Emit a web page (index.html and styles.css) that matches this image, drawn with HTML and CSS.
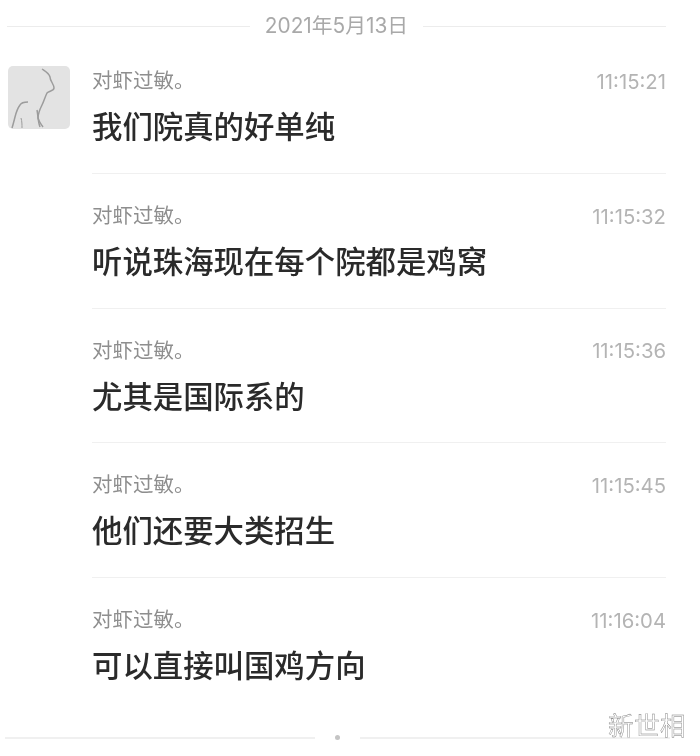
FILE: index.html
```html
<!DOCTYPE html>
<html lang="zh-CN">
<head>
    <meta charset="UTF-8">
    <title>聊天记录</title>
    <link rel="stylesheet" href="styles.css">
</head>
<body>
    <div class="page">
        <div class="day">
            <span class="day-line"></span>
            <span class="day-text">2021年5月13日</span>
            <span class="day-line"></span>
        </div>

        <div class="msg msg-first">
            <div class="avatar">
                <svg width="62" height="63" viewBox="0 0 62 63">
                    <path class="sketch" d="M34 3 C37 5 41 7 42 11 C42 15 46 18 46 22 C46 25 41 25 39 27 C37 31 36 35 34 39 C32 43 30 47 30 52 C31 56 33 58 35 61"/>
                    <path class="sketch" d="M29 44 C30 49 30 56 32 61"/>
                    <path class="sketch" d="M20 36 C16 36 13 37 12 39 C9 43 8 47 7 51 C6 55 5 59 4 62"/>
                    <path class="sketch thin" d="M13 52 C14 55 14 59 14 62"/>
                </svg>
            </div>
            <div class="msg-body">
                <div class="msg-head"><span class="name">对虾过敏。</span><span class="time">11:15:21</span></div>
                <div class="text">我们院真的好单纯</div>
            </div>
        </div>

        <div class="msg">
            <div class="msg-body">
                <div class="msg-head"><span class="name">对虾过敏。</span><span class="time">11:15:32</span></div>
                <div class="text">听说珠海现在每个院都是鸡窝</div>
            </div>
        </div>

        <div class="msg">
            <div class="msg-body">
                <div class="msg-head"><span class="name">对虾过敏。</span><span class="time">11:15:36</span></div>
                <div class="text">尤其是国际系的</div>
            </div>
        </div>

        <div class="msg">
            <div class="msg-body">
                <div class="msg-head"><span class="name">对虾过敏。</span><span class="time">11:15:45</span></div>
                <div class="text">他们还要大类招生</div>
            </div>
        </div>

        <div class="msg msg-last">
            <div class="msg-body">
                <div class="msg-head"><span class="name">对虾过敏。</span><span class="time">11:16:04</span></div>
                <div class="text">可以直接叫国鸡方向</div>
            </div>
        </div>

        <div class="foot">
            <span class="foot-line"></span>
            <span class="foot-dot"></span>
            <span class="foot-line"></span>
        </div>
    </div>
    <div class="mark">新世相</div>
</body>
</html>
```

FILE: styles.css
```css
* {
    box-sizing: border-box;
}

html, body {
    margin: 0;
    background: #fff;
}

body {
    font-family: "Inter", "Noto Sans CJK SC", sans-serif;
    width: 700px;
    height: 756px;
    overflow: hidden;
    position: relative;
}

.page {
    filter: blur(0.5px);
    height: 756px;
    padding: 13px 34px 0 0;
}

.day {
    display: flex;
    align-items: center;
    height: 26px;
    margin-left: 7px;
    gap: 15px;
}

.day-line {
    flex: 1;
    height: 1px;
    background: #ececec;
}

.day-text {
    font-size: 20.8px;
    line-height: 26px;
    color: #a9a9a9;
}

.msg {
    position: relative;
    padding-left: 92px;
}

.msg-first {
    margin-top: 25px;
}

.avatar {
    position: absolute;
    left: 8px;
    top: 2px;
    width: 62px;
    height: 63px;
    border-radius: 5px;
    background: #e3e3e3;
    overflow: hidden;
}

.sketch {
    fill: none;
    stroke: #9c9c9c;
    stroke-width: 1.5;
}

.thin {
    stroke-width: 1;
}

.msg-body {
    height: 134.7px;
    padding-top: 25px;
    border-bottom: 1px solid #f0f0f0;
}

.msg-first .msg-body {
    height: 110px;
    padding-top: 0;
}

.msg-last .msg-body {
    height: 110px;
    border-bottom: none;
}

.msg-head {
    display: flex;
    justify-content: space-between;
    align-items: center;
    height: 30px;
}

.name {
    font-size: 20.5px;
    color: #8e8e8e;
}

.time {
    padding-top: 4px;
    font-size: 20.3px;
    color: #b4b4b4;
}

.text {
    margin-top: 11px;
    font-size: 30.4px;
    font-weight: 500;
    line-height: 44px;
    color: #2a2a2a;
    white-space: nowrap;
}

.foot {
    position: absolute;
    left: 5px;
    right: 30px;
    top: 735px;
    display: flex;
    align-items: center;
    gap: 20px;
}

.foot-line {
    flex: 1;
    height: 2px;
    background: #f0f0f0;
}

.foot-dot {
    width: 5px;
    height: 5px;
    border-radius: 50%;
    background: #c4c4c4;
}

.mark {
    position: absolute;
    left: 608px;
    top: 708px;
    filter: blur(0.2px);
    font-size: 25.5px;
    line-height: 36px;
    letter-spacing: 0.5px;
    color: #fff;
    -webkit-text-stroke: 0.4px #777;
    white-space: nowrap;
}
```
